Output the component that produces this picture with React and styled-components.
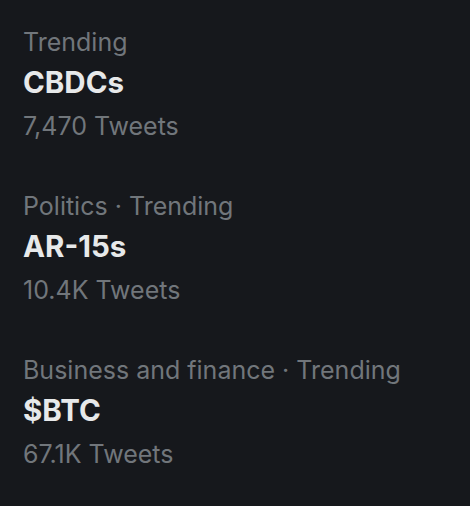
import styled, { createGlobalStyle } from "styled-components";

const GlobalStyle = createGlobalStyle`
  html, body {
    margin: 0;
    padding: 0;
    background: #16181c;
  }
`;

const Panel = styled.div`
  width: 470px;
  height: 506px;
  box-sizing: border-box;
  background: #16181c;
  padding: 21px 23px 0;
  display: flex;
  flex-direction: column;
  gap: 38px;
  font-family: Inter, "Liberation Sans", sans-serif;
`;

const Trend = styled.div`
  display: flex;
  flex-direction: column;
`;

const Meta = styled.span`
  color: #71767b;
  font-size: 25px;
  line-height: 42px;
  font-weight: 400;
`;

const Topic = styled.span`
  color: #e7e9ea;
  font-size: 29.5px;
  line-height: 38px;
  margin-bottom: 4px;
  font-weight: 700;
`;

const trends = [
  { meta: "Trending", topic: "CBDCs", count: "7,470 Tweets" },
  { meta: "Politics · Trending", topic: "AR-15s", count: "10.4K Tweets" },
  { meta: "Business and finance · Trending", topic: "$BTC", count: "67.1K Tweets" },
];

export default function App() {
  return (
    <>
      <GlobalStyle />
      <Panel>
        {trends.map((t) => (
          <Trend key={t.topic}>
            <Meta>{t.meta}</Meta>
            <Topic>{t.topic}</Topic>
            <Meta>{t.count}</Meta>
          </Trend>
        ))}
      </Panel>
    </>
  );
}
